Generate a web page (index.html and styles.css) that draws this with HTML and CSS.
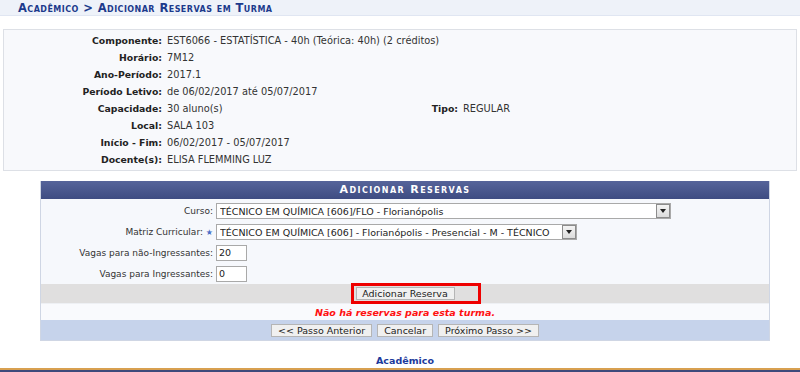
FILE: index.html
```html
<!DOCTYPE html>
<html lang="pt">
<head>
<meta charset="utf-8">
<title>Adicionar Reservas em Turma</title>
<link rel="stylesheet" href="styles.css">
</head>
<body>
<h2 class="page-title">Acadêmico &gt; Adicionar Reservas em Turma</h2>

<div class="info-box">
  <div class="info-grid">
    <div class="lbl">Componente:</div><div class="val span3">EST6066 - ESTATÍSTICA - 40h (Teórica: 40h) (2 créditos)</div>
    <div class="lbl">Horário:</div><div class="val span3">7M12</div>
    <div class="lbl">Ano-Período:</div><div class="val span3">2017.1</div>
    <div class="lbl">Período Letivo:</div><div class="val span3">de 06/02/2017 até 05/07/2017</div>
    <div class="lbl">Capacidade:</div><div class="val">30 aluno(s)</div><div class="lbl">Tipo:</div><div class="val">REGULAR</div>
    <div class="lbl">Local:</div><div class="val span3">SALA 103</div>
    <div class="lbl">Início - Fim:</div><div class="val span3">06/02/2017 - 05/07/2017</div>
    <div class="lbl">Docente(s):</div><div class="val span3">ELISA FLEMMING LUZ</div>
  </div>
</div>

<div class="form-wrap">
  <div class="form-head">Adicionar Reservas</div>
  <div class="form-body">
    <div class="frow">
      <label class="flbl">Curso:</label>
      <div class="select sel-curso"><span class="sel-text">TÉCNICO EM QUÍMICA [606]/FLO - Florianópolis</span><span class="sel-btn"><span class="arrow"></span></span></div>
    </div>
    <div class="frow">
      <label class="flbl">Matriz Curricular: <span class="star">★</span></label>
      <div class="select sel-matriz"><span class="sel-text">TÉCNICO EM QUÍMICA [606] - Florianópolis - Presencial - M - TÉCNICO</span><span class="sel-btn"><span class="arrow"></span></span></div>
    </div>
    <div class="frow">
      <label class="flbl">Vagas para não-Ingressantes:</label>
      <div class="txt">20</div>
    </div>
    <div class="frow">
      <label class="flbl">Vagas para Ingressantes:</label>
      <div class="txt">0</div>
    </div>
  </div>
  <div class="add-row">
    <div class="add-wrap">
      <button class="btn">Adicionar Reserva</button>
      <span class="highlight"></span>
    </div>
  </div>
  <div class="msg-row">Não há reservas para esta turma.</div>
  <div class="foot-row">
    <button class="btn">&lt;&lt; Passo Anterior</button>
    <button class="btn">Cancelar</button>
    <button class="btn">Próximo Passo &gt;&gt;</button>
  </div>
</div>

<div class="footer-link">Acadêmico</div>
<div class="bottom-bar"></div>
</body>
</html>
```

FILE: styles.css
```css
* { box-sizing: border-box; }
html, body { margin: 0; padding: 0; background: #ffffff; }
body {
  font-family: "DejaVu Sans", Verdana, sans-serif;
  font-size: 9px;
  color: #222;
  width: 800px;
  height: 372px;
  overflow: hidden;
}

.page-title {
  margin: 0;
  height: 16px;
  padding: 2px 0 0 18px;
  background: #eef2f9;
  border-bottom: 1px solid #e0e6f2;
  color: #1c3a8c;
  font-size: 11.5px;
  letter-spacing: 0.45px;
  font-weight: bold;
  font-variant: small-caps;
  line-height: 12px;
  white-space: nowrap;
}

.info-box {
  margin: 13px 3px 0 3px;
  background: #f8f9fc;
  border: 1px solid #dde0e6;
  height: 142px;
  padding: 2px 0 0 0;
}
.info-grid {
  display: grid;
  grid-template-columns: 158px 230px 56px auto;
  column-gap: 5px;
  grid-auto-rows: 17px;
  align-items: center;
}
.lbl { text-align: right; font-weight: bold; color: #222; font-size: 9.3px; white-space: nowrap; }
.val { color: #333; white-space: nowrap; font-size: 9.8px; }
.span3 { grid-column: span 3; }

.form-wrap {
  margin: 10px 0 0 40px;
  width: 730px;
  border: 1px solid #cfd6e4;
  border-top: none;
}
.form-head {
  height: 18px;
  background: linear-gradient(#56649a, #3e4c82);
  color: #fff;
  text-align: center;
  font-weight: bold;
  font-variant: small-caps;
  letter-spacing: 1.4px;
  font-size: 11px;
  line-height: 18px;
}
.form-body {
  background: #f6f8fc;
  padding: 4px 0 2px 0;
  display: flex;
  flex-direction: column;
  gap: 5px;
}
.frow { display: flex; align-items: center; height: 16px; }
.flbl {
  width: 175px;
  text-align: right;
  padding-right: 3px;
  color: #333;
  white-space: nowrap;
}
.star { color: #4a6fc6; font-size: 8px; }
.select {
  display: flex;
  align-items: center;
  height: 16px;
  background: #fff;
  border: 1px solid #a9a9a9;
  padding-left: 3px;
  color: #222;
  font-size: 9.5px;
}
.sel-curso { width: 455px; }
.sel-matriz { width: 361px; }
.sel-text { flex: 1; white-space: nowrap; overflow: hidden; }
.sel-btn {
  width: 14px;
  height: 14px;
  border: 1px solid #8c8c8c;
  background: linear-gradient(#f4f4f4, #dcdcdc);
  display: flex;
  align-items: center;
  justify-content: center;
}
.arrow {
  width: 0; height: 0;
  border-left: 3px solid transparent;
  border-right: 3px solid transparent;
  border-top: 4px solid #222;
}
.txt {
  width: 31px;
  height: 16px;
  background: #fff;
  border: 1px solid #a9a9a9;
  padding-left: 2px;
  line-height: 14px;
  font-size: 9.5px;
}

.add-row {
  height: 19px;
  background: #e0dfdf;
  display: flex;
  justify-content: center;
  align-items: center;
}
.add-wrap { position: relative; }
.highlight {
  position: absolute;
  left: -5px; top: -4px;
  width: 130px; height: 21px;
  border: 3px solid #ee0000;
}
.btn {
  font-family: "DejaVu Sans", Verdana, sans-serif;
  font-size: 9.5px;
  color: #222;
  background: #f0f0f0;
  border: 1px solid #b5b5b5;
  height: 13px;
  padding: 0 6px;
  line-height: 11px;
  margin: 0;
}
.add-wrap .btn { width: 99px; padding: 0; }

.msg-row {
  height: 17px;
  background: #f9fafd;
  color: #ff1111;
  font-weight: bold;
  font-style: italic;
  font-size: 9.5px;
  text-align: center;
  line-height: 17px;
  border-top: 1px solid #eef0f4;
}
.foot-row {
  height: 20px;
  background: #c6d3eb;
  display: flex;
  justify-content: center;
  align-items: center;
  gap: 5px;
}

.footer-link {
  margin: 14px 0 0 40px;
  width: 730px;
  text-align: center;
  font-weight: bold;
  color: #1c3a9c;
  font-size: 9.5px;
  height: 13px;
}
.bottom-bar {
  height: 6px;
  border-top: 2px solid #d8a050;
  background: #3e4a7c;
}
```
